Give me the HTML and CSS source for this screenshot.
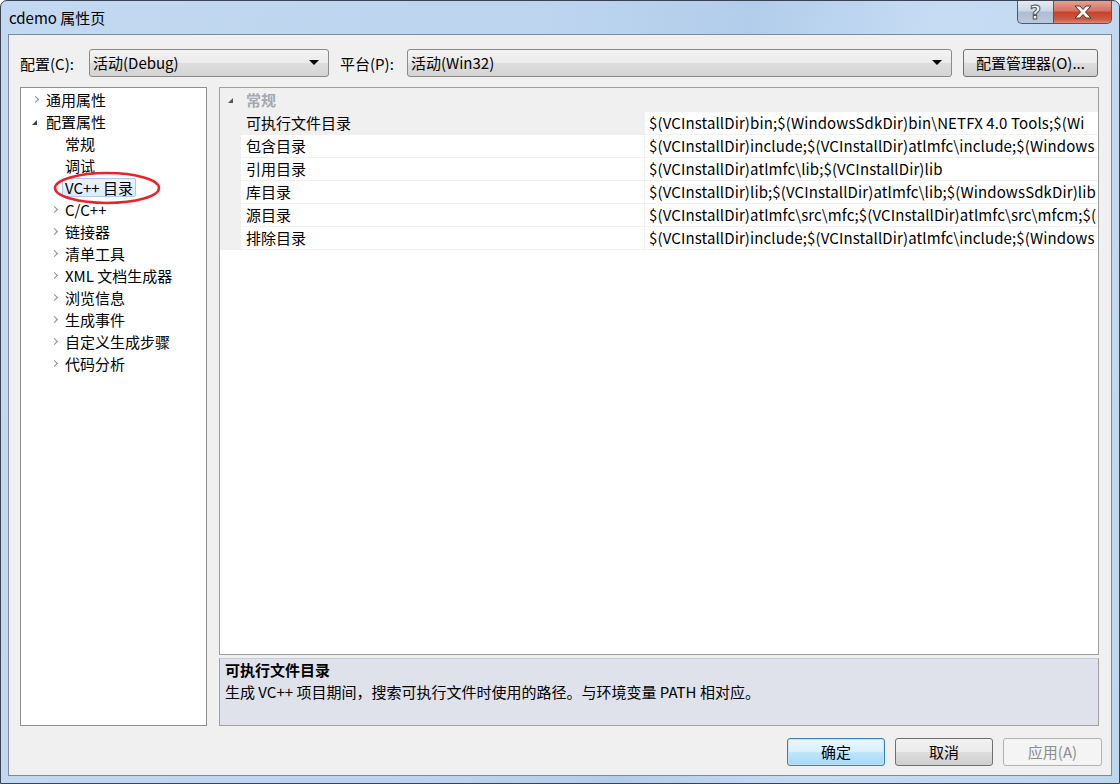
FILE: index.html
```html
<!DOCTYPE html>
<html lang="zh-CN">
<head>
<meta charset="utf-8">
<title>cdemo 属性页</title>
<link rel="stylesheet" href="styles.css">
</head>
<body>
<div class="window">
  <div class="titlebar">
    <span class="title">cdemo 属性页</span>
    <div class="caption-btns">
      <div class="cbtn help"><span class="qmark">?</span></div>
      <div class="cbtn close">
        <svg width="20" height="14" viewBox="0 0 20 14"><path d="M2 1 L7 1 L10 4.5 L13 1 L18 1 L12.5 7 L18 13 L13 13 L10 9.5 L7 13 L2 13 L7.5 7 Z" fill="#fff" stroke="#5a2a22" stroke-width="1" stroke-linejoin="round"/></svg>
      </div>
    </div>
  </div>
  <div class="client">
    <div class="toprow">
      <span class="lbl lbl1">配置(C):</span>
      <div class="combo combo1"><span>活动(Debug)</span><span class="arrow"></span></div>
      <span class="lbl lbl2">平台(P):</span>
      <div class="combo combo2"><span>活动(Win32)</span><span class="arrow"></span></div>
      <div class="btn cfg">配置管理器(O)...</div>
    </div>
    <div class="main">
      <div class="tree">
        <div class="ti l1"><span class="tw"><span class="chev"></span></span>通用属性</div>
        <div class="ti l1"><span class="tw"><span class="tri"></span></span>配置属性</div>
        <div class="ti l2"><span class="tw"></span>常规</div>
        <div class="ti l2"><span class="tw"></span>调试</div>
        <div class="ti l2 selrow"><span class="tw"></span><span class="selbox">VC++ 目录</span>
          <svg class="circle" width="112" height="36" viewBox="0 0 112 36"><ellipse cx="55" cy="18" rx="52" ry="15" fill="none" stroke="#e3262c" stroke-width="2.6"/></svg>
        </div>
        <div class="ti l2"><span class="tw"><span class="chev"></span></span>C/C++</div>
        <div class="ti l2"><span class="tw"><span class="chev"></span></span>链接器</div>
        <div class="ti l2"><span class="tw"><span class="chev"></span></span>清单工具</div>
        <div class="ti l2"><span class="tw"><span class="chev"></span></span>XML 文档生成器</div>
        <div class="ti l2"><span class="tw"><span class="chev"></span></span>浏览信息</div>
        <div class="ti l2"><span class="tw"><span class="chev"></span></span>生成事件</div>
        <div class="ti l2"><span class="tw"><span class="chev"></span></span>自定义生成步骤</div>
        <div class="ti l2"><span class="tw"><span class="chev"></span></span>代码分析</div>
      </div>
      <div class="grid">
        <div class="props">
          <div class="cat"><span class="margin"><span class="tri small"></span></span><span class="catname">常规</span></div>
          <div class="row sel"><span class="margin"></span><span class="name">可执行文件目录</span><span class="val">$(VCInstallDir)bin;$(WindowsSdkDir)bin\NETFX 4.0 Tools;$(Wi</span></div>
          <div class="row"><span class="margin"></span><span class="name">包含目录</span><span class="val">$(VCInstallDir)include;$(VCInstallDir)atlmfc\include;$(Windows</span></div>
          <div class="row"><span class="margin"></span><span class="name">引用目录</span><span class="val">$(VCInstallDir)atlmfc\lib;$(VCInstallDir)lib</span></div>
          <div class="row"><span class="margin"></span><span class="name">库目录</span><span class="val">$(VCInstallDir)lib;$(VCInstallDir)atlmfc\lib;$(WindowsSdkDir)lib</span></div>
          <div class="row"><span class="margin"></span><span class="name">源目录</span><span class="val">$(VCInstallDir)atlmfc\src\mfc;$(VCInstallDir)atlmfc\src\mfcm;$(</span></div>
          <div class="row"><span class="margin"></span><span class="name">排除目录</span><span class="val">$(VCInstallDir)include;$(VCInstallDir)atlmfc\include;$(Windows</span></div>
        </div>
        <div class="desc">
          <div class="dtitle">可执行文件目录</div>
          <div class="dtext">生成 VC++ 项目期间，搜索可执行文件时使用的路径。与环境变量 PATH 相对应。</div>
        </div>
      </div>
    </div>
    <div class="buttons">
      <div class="btn dlg default">确定</div>
      <div class="btn dlg">取消</div>
      <div class="btn dlg disabled">应用(A)</div>
    </div>
  </div>
</div>
</body>
</html>
```

FILE: styles.css
```css
* { box-sizing: border-box; }
html, body { margin: 0; padding: 0; background: #ffffff; }
body {
  font-family: "Noto Sans CJK SC", "Noto Sans", sans-serif;
  font-size: 15px;
  color: #000;
}
.window {
  width: 1120px;
  height: 784px;
  border: 1px solid #3b4350;
  border-radius: 7px 7px 0 0;
  background: linear-gradient(100deg, #c3d9f1 0%, #bcd4ee 45%, #b2cdeb 60%, #c6dcf3 75%, #bfd6ef 100%);
  padding: 0 7px 7px 7px;
  display: flex;
  flex-direction: column;
}
.titlebar {
  height: 33px;
  display: flex;
  justify-content: space-between;
  align-items: flex-start;
  flex: none;
}
.title {
  padding-left: 1px;
  line-height: 34px;
  color: #000;
}
.caption-btns { display: flex; }
.cbtn {
  height: 23px;
  border: 1px solid #4a5a70;
  border-top: none;
  display: flex;
  align-items: center;
  justify-content: center;
}
.help {
  width: 36px;
  border-radius: 0 0 0 5px;
  border-right: none;
  background: linear-gradient(#e3eaf2 0%, #cdd8e4 45%, #aebdd0 50%, #b9c8da 100%);
}
.qmark {
  font-family: "DejaVu Sans", sans-serif;
  font-weight: bold;
  font-size: 19px;
  line-height: 20px;
  color: #fff;
  -webkit-text-stroke: 1px #4d5566;
}
.close {
  width: 59px;
  border-radius: 0 0 5px 0;
  background: linear-gradient(#e6a094 0%, #d5705f 45%, #c7422c 52%, #cf5b44 85%, #e08b70 100%);
}
.client {
  flex: 1;
  background: #f0f0f0;
  border: 1px solid #7d8b9d;
  padding: 14px 9px 9px 11px;
  display: flex;
  flex-direction: column;
}
.toprow {
  height: 28px;
  display: flex;
  align-items: center;
  flex: none;
}
.lbl { line-height: 27px; }
.lbl1 { width: 69px; }
.lbl2 { width: 67px; margin-left: 11px; }
.combo {
  height: 28px;
  border: 1px solid #8a8a8a;
  border-radius: 3px;
  background: linear-gradient(#f3f3f3 0%, #ebebeb 48%, #dddddd 52%, #d4d4d4 100%);
  display: flex;
  align-items: center;
  justify-content: space-between;
  padding: 0 8px 1px 3px;
}
.combo1 { width: 240px; }
.combo2 { width: 545px; }
.arrow {
  width: 0; height: 0;
  border-left: 5px solid transparent;
  border-right: 5px solid transparent;
  border-top: 5px solid #000;
  margin-right: 1px;
}
.btn {
  height: 28px;
  border: 1px solid #707070;
  border-radius: 3px;
  background: linear-gradient(#f2f2f2 0%, #ebebeb 48%, #dddddd 52%, #cfcfcf 100%);
  display: flex;
  align-items: center;
  justify-content: center;
  padding-bottom: 1px;
}
.cfg { width: 135px; margin-left: 11px; }
.main {
  height: 639px;
  margin-top: 10px;
  margin-right: 3px;
  display: flex;
  gap: 12px;
  flex: none;
}
.tree {
  width: 187px;
  background: #fff;
  border: 1px solid #8e8f8f;
  padding-top: 0;
}
.ti {
  height: 22px;
  display: flex;
  align-items: center;
  white-space: nowrap;
  position: relative;
}
.l1 { padding-left: 9px; }
.l2 { padding-left: 28px; }
.tw {
  width: 16px;
  height: 22px;
  display: flex;
  align-items: center;
  justify-content: center;
  flex: none;
}
.chev {
  width: 5px; height: 5px;
  border-right: 1px solid #8c8c8c;
  border-top: 1px solid #8c8c8c;
  transform: rotate(45deg);
  margin-left: -6px;
  margin-top: 1px;
}
.tri {
  width: 0; height: 0;
  border-left: 5px solid transparent;
  border-bottom: 5px solid #3c3c3c;
  margin-left: -7px;
  margin-top: 2px;
}
.tri.small {
  border-bottom-color: #555;
  margin: 0 1px 0 0;
}
.selbox {
  margin-left: -3px;
  padding: 0 2px;
  height: 19px;
  line-height: 17px;
  background: linear-gradient(#eef5fd, #dcebfc);
  border: 1px solid #a9c9ee;
  border-radius: 2px;
}
.circle {
  position: absolute;
  left: 31px;
  top: -6px;
}
.grid {
  width: 880px;
  display: flex;
  flex-direction: column;
}
.props {
  flex: 1;
  background: #fff;
  border: 1px solid #a0a0a0;
  overflow: hidden;
}
.cat {
  height: 24px;
  background: #f0f0f0;
  display: flex;
  align-items: center;
}
.margin {
  width: 21px;
  height: 100%;
  background: #f0f0f0;
  flex: none;
  display: flex;
  align-items: center;
  justify-content: center;
}
.catname {
  padding-left: 5px;
  padding-bottom: 2px;
  color: #a3a9b4;
  font-weight: bold;
}
.row {
  height: 23px;
  display: flex;
  border-bottom: 1px solid #f0f0f0;
}
.name {
  width: 404px;
  flex: none;
  padding-left: 5px;
  line-height: 21px;
  border-right: 1px solid #f0f0f0;
  white-space: nowrap;
}
.row.sel .name { background: #f0f0f0; }
.val {
  flex: 1;
  padding-left: 4px;
  line-height: 21px;
  white-space: nowrap;
  overflow: hidden;
  letter-spacing: 0.12px;
}
.desc {
  height: 68px;
  margin-top: 3px;
  flex: none;
  background: #dfe2ea;
  border: 1px solid #a0a0a0;
  border-top-color: #c8ccd4;
  padding: 0 0 0 5px;
}
.dtitle { font-weight: bold; line-height: 22px; }
.dtext { line-height: 22px; }
.buttons {
  height: 28px;
  margin-top: 12px;
  display: flex;
  justify-content: flex-end;
  gap: 10px;
  flex: none;
}
.dlg { width: 98px; }
.dlg.default {
  border-color: #3c7fb1;
  background: linear-gradient(#eaf6fd 0%, #d9f0fc 48%, #bee6fd 52%, #a7d9f5 100%);
  box-shadow: inset 0 0 0 1px #c2e4f6;
}
.dlg.disabled {
  width: 99px;
  color: #8d8d8d;
  border-color: #adb2b5;
  background: #f4f4f4;
}
```
